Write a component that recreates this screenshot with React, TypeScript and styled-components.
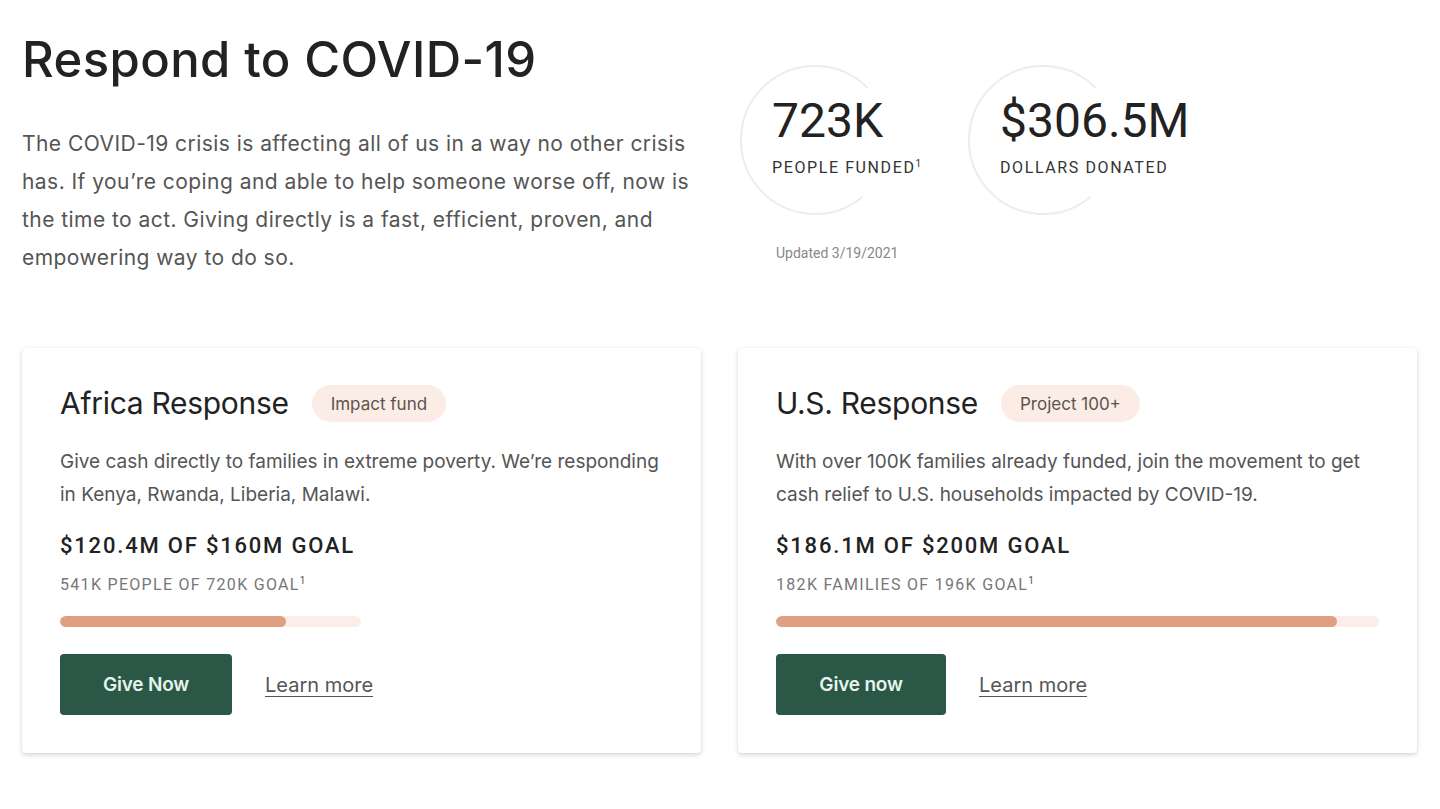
import styled, { createGlobalStyle } from "styled-components";

const GlobalStyle = createGlobalStyle`
	body {
		margin: 0;
		background: #ffffff;
		font-family: Inter, Roboto, "Liberation Sans", Arial, sans-serif;
		color: #222;
	}
	* { box-sizing: border-box; }
`;

const Page = styled.div`
	padding: 0 23px 40px 22px;
`;

const Top = styled.section`
	display: flex;
	align-items: flex-start;
`;

const Intro = styled.div`
	width: 680px;
	padding-top: 30px;
`;

const Title = styled.h1`
	margin: 0;
	font-size: 49px;
	line-height: 60px;
	font-weight: 500;
	color: #222;
	letter-spacing: 0.4px;
`;

const Lead = styled.p`
	margin: 35px 0 0;
	font-size: 21px;
	line-height: 38px;
	color: #555;
	letter-spacing: 0.45px;
`;

const Stats = styled.div`
	margin-left: 38px;
	padding-top: 65px;
	font-family: Roboto, "Liberation Sans", Arial, sans-serif;
`;

const StatRow = styled.div`
	display: flex;
	gap: 78px;
`;

const StatItem = styled.div`
	position: relative;
	width: 150px;
	height: 150px;
	white-space: nowrap;
`;

const Ring = styled.svg`
	position: absolute;
	left: 0;
	top: 0;
`;

const StatText = styled.div`
	position: relative;
	padding: 26px 0 0 32px;
`;

const StatNumber = styled.div`
	font-size: 48px;
	line-height: 60px;
	font-weight: 400;
	color: #222;
`;

const StatLabel = styled.div`
	margin-top: 6px;
	font-size: 16px;
	line-height: 22px;
	letter-spacing: 1.6px;
	color: #333;
	text-transform: uppercase;
	sup { font-size: 10px; letter-spacing: 0; vertical-align: 6px; line-height: 0; }
`;

const Updated = styled.div`
	margin-top: 28px;
	padding-left: 36px;
	font-size: 14px;
	line-height: 20px;
	color: #888;
`;

const Cards = styled.section`
	display: grid;
	grid-template-columns: 1fr 1fr;
	gap: 37px;
	margin-top: 71px;
`;

const Card = styled.article`
	background: #fff;
	border-radius: 4px;
	box-shadow: 0 2px 5px rgba(0, 0, 0, 0.16), 0 0 2px rgba(0, 0, 0, 0.06);
	padding: 37px 30px 38px 38px;
`;

const CardHead = styled.div`
	display: flex;
	align-items: center;
	gap: 23px;
`;

const CardTitle = styled.h2`
	margin: 0;
	font-size: 30px;
	line-height: 37px;
	font-weight: 400;
	color: #222;
	letter-spacing: -0.3px;
`;

const Badge = styled.span`
	display: inline-flex;
	align-items: center;
	height: 37px;
	padding: 0 19px;
	border-radius: 19px;
	background: #fbede6;
	font-size: 17px;
	color: #5a5450;
	letter-spacing: 0;
`;

const Desc = styled.p`
	margin: 23px 0 0;
	max-width: 606px;
	font-size: 19px;
	line-height: 33px;
	color: #555;
	letter-spacing: 0;
`;

const Goal = styled.div`
	margin-top: 21px;
	font-size: 22px;
	line-height: 28px;
	font-weight: 500;
	letter-spacing: 1.8px;
	color: #222;
	font-family: Roboto, "Liberation Sans", Arial, sans-serif;
`;

const SubGoal = styled.div`
	margin-top: 14px;
	font-size: 16px;
	line-height: 22px;
	letter-spacing: 1.3px;
	color: #777;
	font-family: Roboto, "Liberation Sans", Arial, sans-serif;
	sup { font-size: 10px; letter-spacing: 0; vertical-align: 6px; line-height: 0; color: #555; }
`;

const Track = styled.div<{ $width: number }>`
	margin-top: 20px;
	width: ${(p) => p.$width}px;
	height: 11px;
	border-radius: 6px;
	background: #fbede7;
	overflow: hidden;
`;

const Fill = styled.div`
	height: 100%;
	border-radius: 6px;
	background: #dfa081;
`;

const Actions = styled.div`
	display: flex;
	align-items: center;
	gap: 33px;
	margin-top: 27px;
`;

const GiveButton = styled.button<{ $wide?: boolean }>`
	height: 61px;
	width: ${(p) => (p.$wide ? 172 : 170)}px;
	border: none;
	border-radius: 4px;
	background: #2a5746;
	color: #e6f4ec;
	font-family: inherit;
	font-size: 19px;
	font-weight: 600;
	letter-spacing: -0.2px;
	cursor: pointer;
`;

const LearnMore = styled.a`
	font-size: 20px;
	color: #555;
	letter-spacing: 0;
	text-decoration: underline;
	text-underline-offset: 4px;
	text-decoration-thickness: 1px;
	cursor: pointer;
`;

const stats = [
	{ value: "723K", label: "People funded", note: true },
	{ value: "$306.5M", label: "Dollars donated", note: false },
];

const cards = [
	{
		title: "Africa Response",
		badge: "Impact fund",
		desc: "Give cash directly to families in extreme poverty. We\u2019re responding in Kenya, Rwanda, Liberia, Malawi.",
		goal: "$120.4M of $160M goal",
		sub: "541K people of 720K goal",
		track: 301,
		pct: 75.2,
		button: "Give Now",
		wide: true,
	},
	{
		title: "U.S. Response",
		badge: "Project 100+",
		desc: "With over 100K families already funded, join the movement to get cash relief to U.S. households impacted by COVID-19.",
		goal: "$186.1M of $200M goal",
		sub: "182K families of 196K goal",
		track: 603,
		pct: 93,
		button: "Give now",
		wide: false,
	},
];

function StatRing() {
	return (
		<Ring width="150" height="150" viewBox="0 0 150 150">
			<circle cx="75" cy="75" r="74" fill="none" stroke="#f1ece7" strokeWidth="2"
				strokeDasharray="342 465" transform="rotate(50 75 75)" />
		</Ring>
	);
}

export default function App() {
	return (
		<>
			<GlobalStyle />
			<Page>
				<Top>
					<Intro>
						<Title>Respond to COVID-19</Title>
						<Lead>
							The COVID-19 crisis is affecting all of us in a way no other crisis has. If you&rsquo;re coping and able to help someone worse off, now is the time to act. Giving directly is a fast, efficient, proven, and empowering way to do so.
						</Lead>
					</Intro>
					<Stats>
						<StatRow>
							{stats.map((s) => (
								<StatItem key={s.value}>
									<StatRing />
									<StatText>
										<StatNumber>{s.value}</StatNumber>
										<StatLabel>{s.label}{s.note && <sup>1</sup>}</StatLabel>
									</StatText>
								</StatItem>
							))}
						</StatRow>
						<Updated>Updated 3/19/2021</Updated>
					</Stats>
				</Top>
				<Cards>
					{cards.map((c) => (
						<Card key={c.title}>
							<CardHead>
								<CardTitle>{c.title}</CardTitle>
								<Badge>{c.badge}</Badge>
							</CardHead>
							<Desc>{c.desc}</Desc>
							<Goal>{c.goal.toUpperCase()}</Goal>
							<SubGoal>{c.sub.toUpperCase()}<sup>1</sup></SubGoal>
							<Track $width={c.track}>
								<Fill style={{ width: `${c.pct}%` }} />
							</Track>
							<Actions>
								<GiveButton $wide={c.wide}>{c.button}</GiveButton>
								<LearnMore>Learn more</LearnMore>
							</Actions>
						</Card>
					))}
				</Cards>
			</Page>
		</>
	);
}
